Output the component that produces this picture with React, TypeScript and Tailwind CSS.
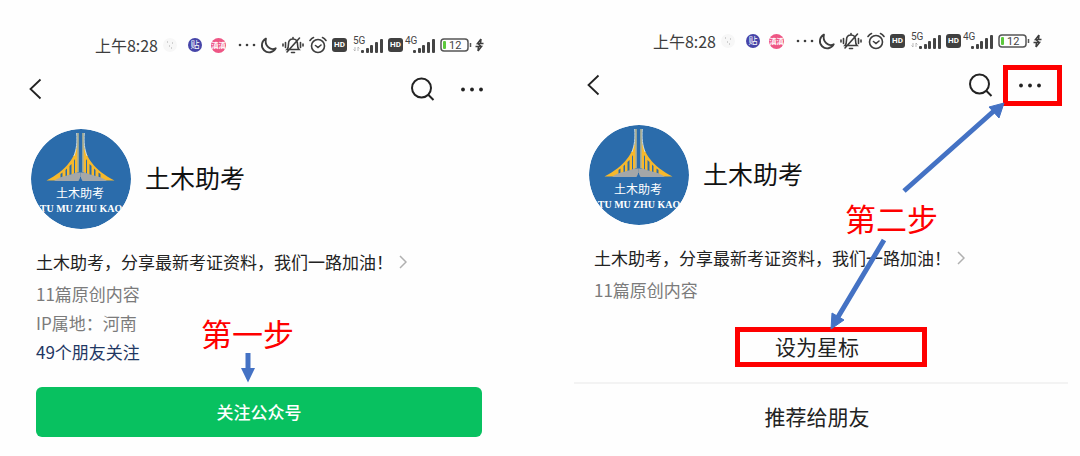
import React from 'react';
import clsx from 'clsx';

const ARROW = '#4472c4';

// left half of the bridge, mirrored for the right one
const BridgeHalf: React.FC = () => (
  <>
    <path d="M46.500 14C44.500 28 36 41 15.500 51.500H24L46.500 43.500Z" fill="#f6b82c" />
    <path d="M43 31.500 44 30V45H43ZM38.500 37 40.500 35V47H38.500ZM34.500 41 36 39.500V48H34.500ZM29.500 45 31.500 43.500V49H29.500Z" fill="#2b6cab" />
    <path d="M45.700 4C46.400 14 45.500 20 43 27" fill="none" stroke="#cfdde2" strokeWidth="1" />
    <path d="M47 4V43" stroke="#dcc98c" strokeWidth="1.200" />
    <path d="M23 52C31 46 40 46.500 45 43.500H49.500V48L47.500 52Z" fill="#a4a7a8" />
  </>
);

const Avatar: React.FC = () => (
  <svg viewBox="0 0 100 100" className="w-[100px] h-[100px] rounded-full shrink-0" role="img" aria-label="土木助考">
    <circle cx="50" cy="50" r="50" fill="#2b6cab" />
    <BridgeHalf />
    <g transform="translate(99 0) scale(-1 1)">
      <BridgeHalf />
    </g>
    <path d="M49.500 48v5" stroke="#2b6cab" strokeWidth="1" />
    <text x="49" y="69" textAnchor="middle" fontSize="12" fill="#fff" fontFamily="'Noto Sans CJK SC', sans-serif">
      土木助考
    </text>
    <text x="50" y="83" textAnchor="middle" fontSize="10" fontWeight="700" fill="#fff" fontFamily="'Liberation Serif', serif">
      TU MU ZHU KAO
    </text>
  </svg>
);

const Signal: React.FC<{ label: string; data?: boolean }> = ({ label, data }) => (
  <svg viewBox="0 0 31 18" className="w-[31px] h-[18px]" fill="#444">
    <text x="0" y="8" fontSize="10" fontFamily="Roboto, sans-serif">{label}</text>
    {data && <path d="M2 11v4M.5 13.500 2 15M5 15v-4M6.500 12.500 5 11" stroke="#aaa" strokeWidth=".8" fill="none" />}
    <rect x="8" y="14" width="3" height="3" rx="1" />
    <rect x="13" y="12" width="3" height="5" rx="1" />
    <rect x="17" y="9" width="3" height="8" rx="1" />
    <rect x="22" y="6" width="3" height="11" rx="1" />
    <rect x="27" y="3" width="3" height="14" rx="1" />
  </svg>
);

const HdBadge: React.FC = () => (
  <span className="w-[15px] h-[14px] rounded-[3px] bg-[#404040] text-white text-[8px] leading-[14px] font-bold text-center font-[Roboto]">
    HD
  </span>
);

const StatusBar: React.FC = () => (
  <div className="h-8 flex items-center justify-end pr-[26px] text-[#3d3d3d]">
    <span className="text-[16px] leading-5 mr-[5px]">上午8:28</span>
    <svg viewBox="0 0 14 14" className="w-[14px] h-[14px] mr-[11px]">
      <circle cx="7" cy="7" r="7" fill="#f7f7f7" />
      <path d="M4 4h1M9 5h1M6 8h1M8 10h1" stroke="#aaa" />
    </svg>
    <span className="w-[14px] h-[14px] mr-[9px] rounded-full bg-[#4644a8] text-white text-[9px] leading-[14px] text-center">贴</span>
    <span className="w-[15px] h-[15px] mr-3 rounded-full bg-[#ee5685] text-white text-[7px] leading-[15px] text-center font-bold">滇滇</span>
    <svg viewBox="0 0 18 4" className="w-[18px] h-1 mr-1" fill="currentColor">
      <circle cx="2" cy="2" r="1.300" />
      <circle cx="9" cy="2" r="1.300" />
      <circle cx="16" cy="2" r="1.300" />
    </svg>
    <svg viewBox="0 0 17 17" className="w-[17px] h-[17px] mr-[5px]" fill="none" stroke="currentColor" strokeWidth="1.800" strokeLinejoin="round">
      <path d="M6 1.500A7.300 7.300 0 1 0 15.800 11.200C11 14 4 9 6 1.500Z" />
    </svg>
    <svg viewBox="0 0 22 18" className="w-[22px] h-[18px] mr-[5px]" fill="none" stroke="currentColor" strokeWidth="1.600" strokeLinecap="round">
      <path d="M5 13.500h12c-1.500-1.500-1.500-3-1.500-5.500C15.500 5 14 3 11 3S6.500 5 6.500 8 6.500 12 5 13.500ZM9.500 16.500h3M11 1.500V3M17.500 2 5 16M3.500 6.500v5M18.500 6.500v5M1 8v2M21 8v2" />
    </svg>
    <svg viewBox="0 0 18 18" className="w-[18px] h-[18px] mr-[5px]" fill="none" stroke="currentColor" strokeWidth="1.600" strokeLinecap="round">
      <circle cx="9" cy="10" r="6.500" />
      <path d="m6.500 9.500 2.500 2 3-2.500M1 4.500C2 3 3 2 4.500 1.500M17 4.500C16 3 15 2 13.500 1.500" />
    </svg>
    <HdBadge />
    <span className="ml-1.5 mr-1"><Signal label="5G" data /></span>
    <HdBadge />
    <span className="ml-0.5 mr-1"><Signal label="4G" /></span>
    <svg viewBox="0 0 32 14" className="w-8 h-[14px] mr-[3px]">
      <rect x="1" y="1" width="27" height="12" rx="3" fill="none" stroke="#555" strokeWidth="1.500" />
      <rect x="3" y="3" width="3" height="8" rx="1" fill="#5cc83c" />
      <path d="M30.500 5v4" stroke="#555" strokeWidth="1.500" />
      <text x="9" y="11" fontSize="11" fill="#444" fontFamily="Roboto, sans-serif">12</text>
    </svg>
    <svg viewBox="0 0 9 14" className="w-[9px] h-[14px]" fill="none" stroke="currentColor" strokeWidth="1.500">
      <path d="M6 1 2.500 5.500H8.500M.5 8.500H6.500L3 13M6 1 5.500 6M3.500 8 3 13M2.500 5.500 6.500 8.500" />
    </svg>
  </div>
);

const NavBar: React.FC<{ highlight?: boolean }> = ({ highlight }) => (
  <nav className="h-14 flex items-center pl-3 pr-[25px] text-[#222]">
    <button type="button" aria-label="返回" className="mr-auto">
      <svg viewBox="0 0 14 22" className="w-[14px] h-[22px]" fill="none" stroke="currentColor" strokeWidth="1.800">
        <path d="M12.500 1.500 2.500 11l10 9.500" />
      </svg>
    </button>
    <button type="button" aria-label="搜索">
      <svg viewBox="0 0 24 24" className="w-6 h-6" fill="none" stroke="currentColor" strokeWidth="2">
        <circle cx="10.500" cy="11" r="9.500" />
        <path d="m17 17.500 5.500 5.500" />
      </svg>
    </button>
    <button type="button" aria-label="更多" className="relative ml-6">
      <svg viewBox="0 0 26 24" className="w-[26px] h-6" fill="currentColor">
        <circle cx="4" cy="12.500" r="1.900" />
        <circle cx="13" cy="12.500" r="1.900" />
        <circle cx="22" cy="12.500" r="1.900" />
      </svg>
      {highlight && <span className="absolute -left-[14px] -right-[19px] -top-2 -bottom-[9px] border-5 border-[#fe0000]" />}
    </button>
  </nav>
);

const Profile: React.FC = () => (
  <>
    <div className="mt-3 pl-[15px] flex items-center">
      <Avatar />
      <h1 className="ml-[14px] pb-1 text-[25px] leading-8 text-[#111]">土木助考</h1>
    </div>
    <a href="#intro" className="mt-5 ml-5 h-[26px] flex items-center text-[17px] text-[#222]">
      <span className="whitespace-nowrap">土木助考，分享最新考证资料，我们一路加油！</span>
      <svg viewBox="0 0 8 14" className="w-2 h-[14px] ml-[6px]" fill="none" stroke="#b0b0b0" strokeWidth="1.500">
        <path d="m1 1 6 6-6 6" />
      </svg>
    </a>
  </>
);

const Screen: React.FC<{ className: string; highlight?: boolean; children: React.ReactNode }> = ({
  className,
  highlight,
  children,
}) => (
  <section className={clsx('relative', className)}>
    <StatusBar />
    <NavBar highlight={highlight} />
    <Profile />
    {children}
  </section>
);

const App: React.FC = () => {
  return (
    <main className="grid grid-cols-2 gap-16 pl-4 pr-3 bg-[#fefefe] font-['Noto_Sans_CJK_SC',sans-serif] overflow-hidden">
      <Screen className="pt-[29px]">
        <div className="mt-1 ml-5 text-[17px] leading-[29px] text-[#7b7b7b]">
          <p>11篇原创内容</p>
          <p>IP属地：河南</p>
          <p className="text-[#1f3763]">49个朋友关注</p>
        </div>
        <div className="mt-[21px] pl-5 pr-7 pb-5">
          <button type="button" className="w-full h-[50px] rounded-md bg-[#08c160] text-white text-[17px] font-medium">
            关注公众号
          </button>
        </div>

        {/* step one */}
        <p className="absolute left-[185px] top-[312px] text-[31px] leading-[42px] text-[#fe0000]">第一步</p>
        <svg viewBox="0 0 16 30" className="absolute left-[224px] top-[353px] w-4 h-[30px]" fill={ARROW}>
          <path d="M5.500 0h5v15H15L8 29.500 1 15h4.500Z" />
        </svg>
      </Screen>

      <Screen className="pt-[25px]" highlight>
        <div className="mt-1 ml-5 text-[17px] leading-[29px] text-[#7b7b7b]">
          <p>11篇原创内容</p>
        </div>
        <div className="mt-[23px] text-[21px] text-[#222]">
          <div className="relative pb-[15px] border-b-2 border-[#f3f3f3]">
            <button type="button" className="w-full h-10 pr-2">设为星标</button>
            <span className="absolute left-[161px] top-0 w-48 h-10 border-5 border-[#fe0000]" />
          </div>
          <button type="button" className="w-full h-[66px] pr-2">推荐给朋友</button>
        </div>

        {/* step two */}
        <svg viewBox="0 0 494 456" className="absolute left-0 top-0 w-[494px] h-[456px] pointer-events-none" fill={ARROW} stroke={ARROW}>
          <path d="M330 191 421 110M310 240 264 317" strokeWidth="5" fill="none" />
          <path d="m430 103-15 4 10 11ZM257 329l1-16 12 7Z" strokeWidth="1" />
        </svg>
        <p className="absolute left-[271px] top-[197px] text-[31px] leading-[42px] text-[#fe0000]">第二步</p>
      </Screen>
    </main>
  );
};

export default App;
